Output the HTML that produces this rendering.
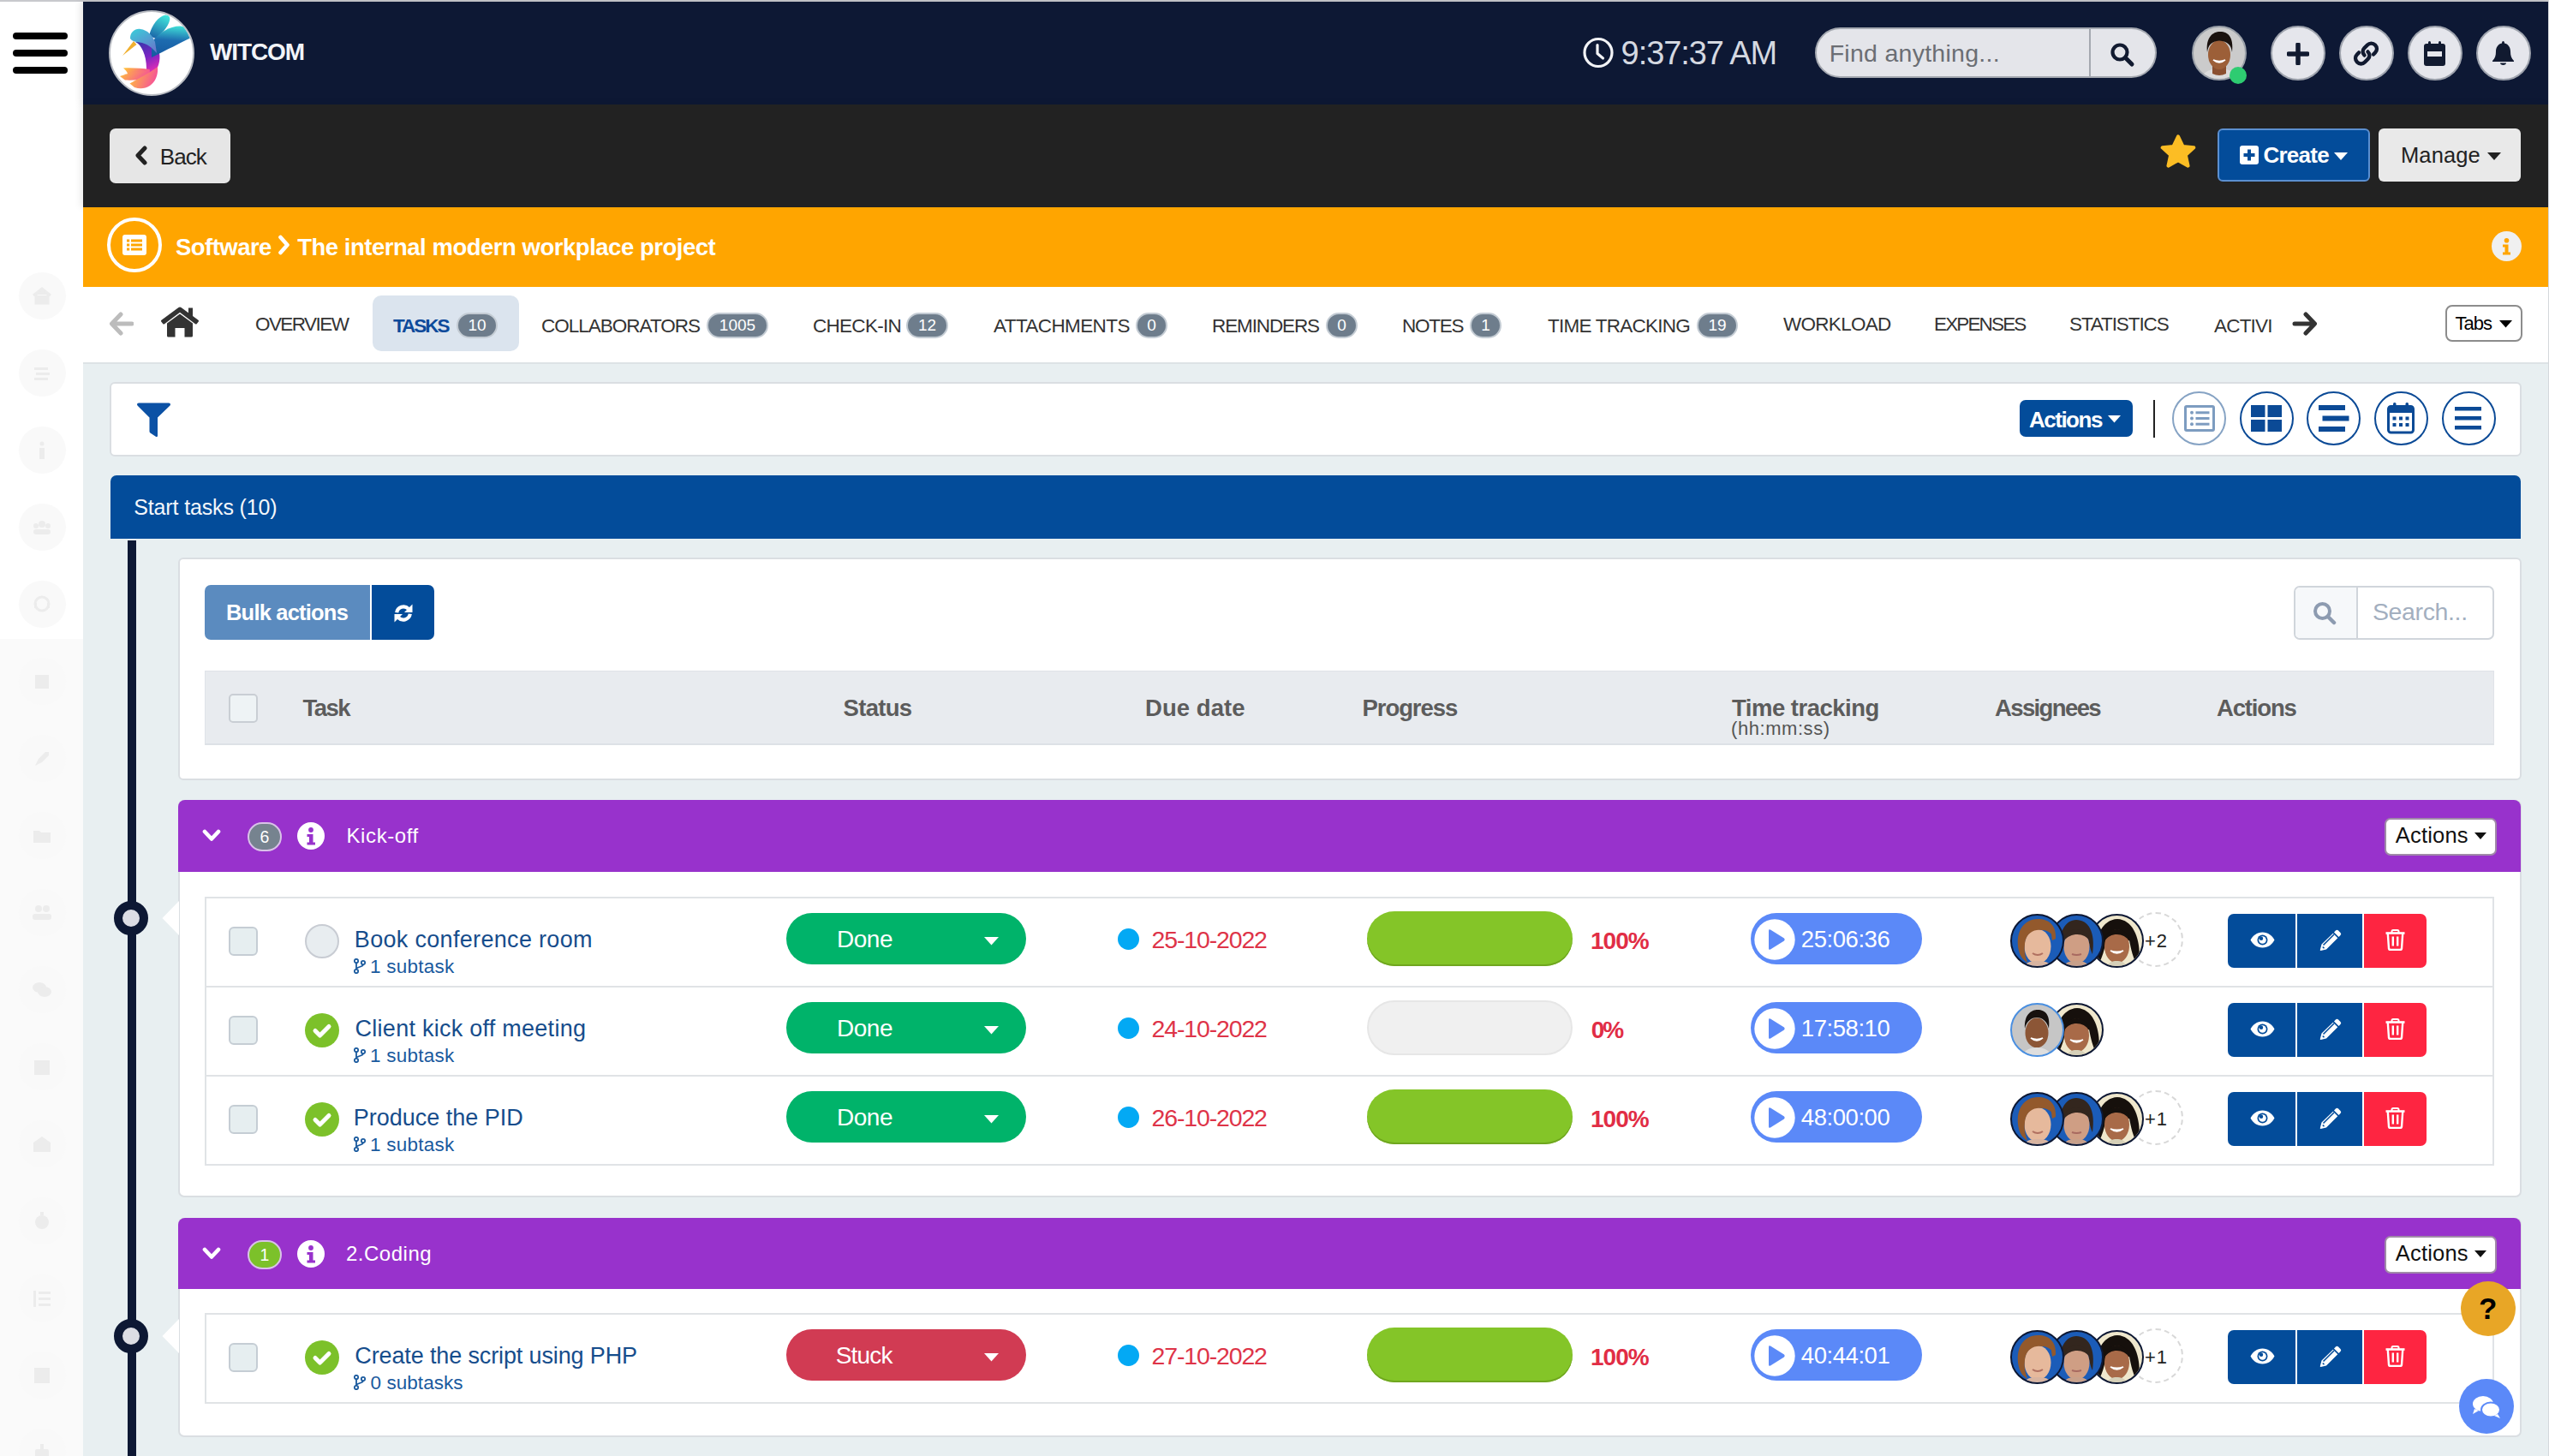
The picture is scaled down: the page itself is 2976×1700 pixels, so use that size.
<!DOCTYPE html>
<html><head><meta charset="utf-8">
<style>
*{box-sizing:border-box;margin:0;padding:0}
html,body{width:2976px;height:1700px;overflow:hidden}
body{position:relative;background:#e8eff1;font-family:"Liberation Sans",sans-serif;color:#333}
.a{position:absolute}
.t{position:absolute;white-space:nowrap;line-height:1}
svg{display:block}
.th{font-size:27px;font-weight:bold;color:#5c5c5c}
.cb{width:34px;height:34px;border-radius:6px;background:#e6eef0;border:2px solid #c5cdd4}
.ttl{font-size:27px;color:#164d8c}
.sub{font-size:22.5px;color:#1a5a9e}
.pill{width:280px;height:60px;border-radius:30px}
.stx{font-size:28px;color:#fff}
.dt{font-size:28.5px;color:#de3448}
.pb{width:240px;height:64px;border-radius:32px}
.pc{font-size:28px;font-weight:bold;color:#e12d45}
.tp{width:200px;height:60px;border-radius:30px;background:#5b89f8}
.tt{font-size:27.5px;color:#fff}
.av{width:63px;height:63px;border-radius:50%;border:2.5px solid #0d1834;overflow:hidden}
.av svg{margin:-1px 0 0 -1px}
.ab{width:79px;height:63px}
.tab{font-size:21.5px;color:#333}
.bdg{position:absolute;height:30px;border-radius:15px;background:#6e7d8c;border:2px solid #c3cbd3;color:#fff;font-size:19px;line-height:26px;text-align:center}
</style></head><body>
<!-- top grey line -->
<div class="a" style="left:0;top:0;width:2976px;height:2px;background:#c8c9cd"></div>
<!-- right edge line -->
<div class="a" style="left:2975px;top:0;width:1px;height:1700px;background:#d5d8dc;z-index:50"></div>

<!-- SIDEBAR -->
<div id="sidebar" class="a" style="left:0;top:2px;width:97px;height:1698px;background:#fff;background:linear-gradient(#fff 0,#fff 744px,#fafafa 744px)">
  <div class="a" style="left:15px;top:36px;width:64px;height:8px;border-radius:4px;background:#000"></div>
  <div class="a" style="left:15px;top:56px;width:64px;height:8px;border-radius:4px;background:#000"></div>
  <div class="a" style="left:15px;top:76px;width:64px;height:8px;border-radius:4px;background:#000"></div>
<div class="a" style="left:22px;top:316px;width:55px;height:55px;border-radius:50%;background:#f9f9f9"></div><svg class="a" style="left:35px;top:330px" width="28" height="28" viewBox="0 0 28 28"><path d="M4 13 L14 5 L24 13 M7 12 V22 H21 V12" fill="#ececec" stroke="#ececec" stroke-width="3"/></svg>
<div class="a" style="left:22px;top:406px;width:55px;height:55px;border-radius:50%;background:#f9f9f9"></div><svg class="a" style="left:35px;top:420px" width="28" height="28" viewBox="0 0 28 28"><rect x="5" y="7" width="16" height="3" fill="#ececec"/><rect x="7" y="13" width="16" height="3" fill="#ececec"/><rect x="5" y="19" width="16" height="3" fill="#ececec"/></svg>
<div class="a" style="left:22px;top:496px;width:55px;height:55px;border-radius:50%;background:#f9f9f9"></div><svg class="a" style="left:35px;top:510px" width="28" height="28" viewBox="0 0 28 28"><circle cx="14" cy="6" r="2.5" fill="#ececec"/><rect x="11" y="11" width="6" height="13" fill="#ececec"/></svg>
<div class="a" style="left:22px;top:586px;width:55px;height:55px;border-radius:50%;background:#f9f9f9"></div><svg class="a" style="left:35px;top:600px" width="28" height="28" viewBox="0 0 28 28"><circle cx="14" cy="10" r="4" fill="#ececec"/><circle cx="7" cy="12" r="3" fill="#ececec"/><circle cx="21" cy="12" r="3" fill="#ececec"/><rect x="4" y="16" width="20" height="6" rx="3" fill="#ececec"/></svg>
<div class="a" style="left:22px;top:676px;width:55px;height:55px;border-radius:50%;background:#f9f9f9"></div><svg class="a" style="left:35px;top:690px" width="28" height="28" viewBox="0 0 28 28"><circle cx="14" cy="13" r="8" fill="none" stroke="#ececec" stroke-width="3"/><rect x="5" y="12" width="3" height="6" fill="#ececec"/><rect x="20" y="12" width="3" height="6" fill="#ececec"/></svg>
<div class="a" style="left:22px;top:766px;width:55px;height:55px;border-radius:50%;background:#f9f9f9"></div><svg class="a" style="left:35px;top:780px" width="28" height="28" viewBox="0 0 28 28"><rect x="6" y="6" width="16" height="16" fill="#ececec"/></svg>
<div class="a" style="left:22px;top:856px;width:55px;height:55px;border-radius:50%;background:#f9f9f9"></div><svg class="a" style="left:35px;top:870px" width="28" height="28" viewBox="0 0 28 28"><path d="M6 22 L10 14 L18 6 L22 6 L22 10 L14 18Z" fill="#ececec"/></svg>
<div class="a" style="left:22px;top:946px;width:55px;height:55px;border-radius:50%;background:#f9f9f9"></div><svg class="a" style="left:35px;top:960px" width="28" height="28" viewBox="0 0 28 28"><path d="M4 8 H11 L13 10 H24 V22 H4Z" fill="#ececec"/></svg>
<div class="a" style="left:22px;top:1036px;width:55px;height:55px;border-radius:50%;background:#f9f9f9"></div><svg class="a" style="left:35px;top:1050px" width="28" height="28" viewBox="0 0 28 28"><circle cx="10" cy="9" r="4" fill="#ececec"/><circle cx="19" cy="9" r="4" fill="#ececec"/><rect x="3" y="15" width="22" height="7" rx="3" fill="#ececec"/></svg>
<div class="a" style="left:22px;top:1126px;width:55px;height:55px;border-radius:50%;background:#f9f9f9"></div><svg class="a" style="left:35px;top:1140px" width="28" height="28" viewBox="0 0 28 28"><ellipse cx="11" cy="11" rx="8" ry="6" fill="#ececec"/><ellipse cx="17" cy="16" rx="8" ry="6" fill="#ececec"/></svg>
<div class="a" style="left:22px;top:1216px;width:55px;height:55px;border-radius:50%;background:#f9f9f9"></div><svg class="a" style="left:35px;top:1230px" width="28" height="28" viewBox="0 0 28 28"><rect x="5" y="6" width="18" height="17" fill="#ececec"/></svg>
<div class="a" style="left:22px;top:1306px;width:55px;height:55px;border-radius:50%;background:#f9f9f9"></div><svg class="a" style="left:35px;top:1320px" width="28" height="28" viewBox="0 0 28 28"><path d="M4 12 L14 5 L24 12 V23 H4Z" fill="#ececec"/></svg>
<div class="a" style="left:22px;top:1396px;width:55px;height:55px;border-radius:50%;background:#f9f9f9"></div><svg class="a" style="left:35px;top:1410px" width="28" height="28" viewBox="0 0 28 28"><circle cx="14" cy="15" r="8" fill="#ececec"/><rect x="12" y="3" width="4" height="4" fill="#ececec"/></svg>
<div class="a" style="left:22px;top:1486px;width:55px;height:55px;border-radius:50%;background:#f9f9f9"></div><svg class="a" style="left:35px;top:1500px" width="28" height="28" viewBox="0 0 28 28"><rect x="10" y="6" width="14" height="3" fill="#ececec"/><rect x="10" y="13" width="14" height="3" fill="#ececec"/><rect x="10" y="20" width="14" height="3" fill="#ececec"/><rect x="4" y="5" width="3" height="19" fill="#ececec"/></svg>
<div class="a" style="left:22px;top:1576px;width:55px;height:55px;border-radius:50%;background:#f9f9f9"></div><svg class="a" style="left:35px;top:1590px" width="28" height="28" viewBox="0 0 28 28"><rect x="5" y="5" width="18" height="18" fill="#ececec"/></svg>
<div class="a" style="left:22px;top:1666px;width:55px;height:55px;border-radius:50%;background:#f9f9f9"></div><svg class="a" style="left:35px;top:1680px" width="28" height="28" viewBox="0 0 28 28"><rect x="6" y="10" width="16" height="12" rx="2" fill="#ececec"/><rect x="12" y="4" width="4" height="6" fill="#ececec"/></svg>
</div>

<!-- NAVY TOP BAR -->
<div id="topbar" class="a" style="left:97px;top:2px;width:2878px;height:120px;background:#0d1834;box-shadow:-3px 0 8px rgba(0,0,0,0.10)"></div>
<!-- DARK BAR -->
<div id="darkbar" class="a" style="left:97px;top:122px;width:2878px;height:120px;background:#222;box-shadow:-3px 0 8px rgba(0,0,0,0.08)"></div>
<!-- ORANGE BAR -->
<div id="orangebar" class="a" style="left:97px;top:242px;width:2878px;height:93px;background:#ffa500"></div>
<!-- TABS ROW -->
<div id="tabsrow" class="a" style="left:97px;top:335px;width:2878px;height:90px;background:#fff;border-bottom:2px solid #dde3e6"></div>


<!-- NAVY TOP BAR CONTENT -->
<div class="a" style="left:127px;top:12px;width:100px;height:100px;border-radius:50%;background:#fff;border:2px solid #b9bcc2;overflow:hidden">
<svg width="96" height="96" viewBox="2 2 96 96" style="margin:0">
<defs>
<linearGradient id="gw1" x1="0.7" y1="0" x2="0.3" y2="1"><stop offset="0" stop-color="#40e4dc"/><stop offset="1" stop-color="#1b66a8"/></linearGradient>
<linearGradient id="gw2" x1="0.5" y1="0" x2="0.4" y2="1"><stop offset="0" stop-color="#3fdcd6"/><stop offset="0.45" stop-color="#1d6cb0"/><stop offset="1" stop-color="#165aa0"/></linearGradient>
<linearGradient id="gh" x1="0.2" y1="0" x2="0.8" y2="1"><stop offset="0" stop-color="#3cc8d8"/><stop offset="1" stop-color="#6a76cc"/></linearGradient>
<linearGradient id="gb" x1="0" y1="0" x2="0.3" y2="1"><stop offset="0" stop-color="#2e3aa6"/><stop offset="0.55" stop-color="#7a24c4"/><stop offset="1" stop-color="#e82cb4"/></linearGradient>
<linearGradient id="gt" x1="0" y1="0.3" x2="1" y2="0.6"><stop offset="0" stop-color="#ffbe3c"/><stop offset="1" stop-color="#f54c9c"/></linearGradient>
</defs>
<path d="M31 37 C38 40 44 52 44 68 L44 78 C52 76 57 70 59 60 C61 50 57 42 52 37 C45 34 36 34 31 37 Z" fill="url(#gb)"/>
<path d="M47 30 C50 17 58 7 66 5.5 C70 5 72 8 71 12 C69 20 62 27 55 33 Z" fill="url(#gw1)"/>
<path d="M50 38 C58 26 72 18 84 18.5 C90 19 94 25 96 32 C84 38 68 46 50 55 Z" fill="url(#gw2)"/>
<path d="M25 33 C25 25 31 21 37 22 C45 23 51 29 54 37 L56 50 C50 43 44 38.5 36 37.5 C31 37 27 36 25 33 Z" fill="url(#gh)"/>
<path d="M29 36 L16 53 L32.5 40 Z" fill="#f0b030"/>
<path d="M17 67.5 C28 67 40 68 48 69 L45 76 C36 75 28 74 22 74.5 C22 72 19 69.5 17 67.5 Z" fill="url(#gt)"/>
<path d="M13 77 C24 73 36 71 48 70 L47 80 C38 81 28 82 19 81.5 C17 80 15 78.5 13 77 Z" fill="url(#gt)"/>
<path d="M24.5 85.5 C34 80 46 74 57 66 C58 76 54 84 48 88 C42 92 36 92 30 90 C28 88.5 26.5 87 24.5 85.5 Z" fill="url(#gt)"/>
</svg>
</div>
<div class="t" id="witcom" style="left:245.0px;top:47px;font-size:28px;font-weight:bold;color:#f2f4f8;letter-spacing:-1.12px">WITCOM</div>

<!-- clock -->
<svg class="a" style="left:1847px;top:43px" width="38" height="38" viewBox="0 0 38 38"><circle cx="19" cy="18.5" r="16" fill="none" stroke="#f2f3f6" stroke-width="3.2"/><path d="M18 9.5 V19.5 L24.5 25" fill="none" stroke="#f2f3f6" stroke-width="3.2" stroke-linecap="round" stroke-linejoin="round"/></svg>
<div class="t" id="clock" style="left:1892.6px;top:43px;font-size:38px;color:#d5d9e1;letter-spacing:-1.07px">9:37:37 AM</div>

<!-- search -->
<div class="a" style="left:2119px;top:32px;width:399px;height:59px;border-radius:30px;background:#e4e5ea;border:2px solid #a4a8b0"></div>
<div class="a" style="left:2439px;top:34px;width:2px;height:55px;background:#a4a8b0"></div>
<div class="t" id="find" style="left:2135.7px;top:48px;font-size:28.5px;color:#6b6e74;letter-spacing:0.27px">Find anything...</div>
<svg class="a" style="left:2463px;top:49px" width="30" height="30" viewBox="0 0 30 30"><circle cx="12" cy="12" r="8.5" fill="none" stroke="#111a30" stroke-width="4.2"/><path d="M18.5 18.5 L26 26" stroke="#111a30" stroke-width="5" stroke-linecap="round"/></svg>

<!-- avatar -->
<div class="a" style="left:2559px;top:30px;width:64px;height:64px;border-radius:50%;background:#cbcbcb;border:2px solid #9aa0a8;overflow:hidden">
<svg width="60" height="60" viewBox="0 0 60 60"><path d="M8 62 C10 52 20 48 30 48 C40 48 50 52 52 62Z" fill="#dcdcdc"/><path d="M22 44 H38 V54 Q30 58 22 54Z" fill="#8a5030"/><ellipse cx="30" cy="32" rx="13" ry="17" fill="#9c5f38"/><path d="M16 29 C14 12 22 5 31 5 C41 5 47 12 45 29 C44 21 40 16 30 15.5 C21 16 17 21 16 29Z" fill="#1a120e"/><path d="M23 38 Q30 44 37 38 Q30 41 23 38Z" fill="#fff" stroke="#fff" stroke-width="1.5"/></svg>
</div>
<div class="a" style="left:2603px;top:78px;width:20px;height:20px;border-radius:50%;background:#2ecc71"></div>

<!-- circle buttons -->
<div class="a" style="left:2651px;top:30px;width:64px;height:64px;border-radius:50%;background:#e5e6ec;border:2.5px solid #9ea3ad"></div>
<svg class="a" style="left:2670px;top:50px" width="26" height="26" viewBox="0 0 26 26"><path d="M13 2 V24 M2 13 H24" stroke="#111a30" stroke-width="5.5" stroke-linecap="round"/></svg>
<div class="a" style="left:2731px;top:30px;width:64px;height:64px;border-radius:50%;background:#e5e6ec;border:2.5px solid #9ea3ad"></div>
<svg class="a" style="left:2747px;top:47px" width="31" height="31" viewBox="0 0 31 31"><path d="M13.5 17.5 C11 15 11 11.5 13.5 9 L17 5.5 C19.5 3 23.5 3 26 5.5 C28.5 8 28.5 12 26 14.5 L24 16.5" fill="none" stroke="#111a30" stroke-width="4.5" stroke-linecap="round"/><path d="M17.5 13.5 C20 16 20 19.5 17.5 22 L14 25.5 C11.5 28 7.5 28 5 25.5 C2.5 23 2.5 19 5 16.5 L7 14.5" fill="none" stroke="#111a30" stroke-width="4.5" stroke-linecap="round"/></svg>
<div class="a" style="left:2811px;top:30px;width:64px;height:64px;border-radius:50%;background:#e5e6ec;border:2.5px solid #9ea3ad"></div>
<svg class="a" style="left:2830px;top:48px" width="25" height="29" viewBox="0 0 25 29"><rect x="5" y="0" width="3" height="6" rx="1.5" fill="#111a30"/><rect x="17" y="0" width="3" height="6" rx="1.5" fill="#111a30"/><rect x="0" y="3" width="25" height="26" rx="3" fill="#111a30"/><rect x="4" y="12" width="17" height="6" fill="#e5e6ec"/></svg>
<div class="a" style="left:2891px;top:30px;width:64px;height:64px;border-radius:50%;background:#e5e6ec;border:2.5px solid #9ea3ad"></div>
<svg class="a" style="left:2910px;top:48px" width="25" height="28" viewBox="0 0 25 28"><path d="M12.5 0 C13.5 0 14 1 14 2.5 C19 3.5 21 8 21 12 C21 17 22 20 25 23 V24 H0 V23 C3 20 4 17 4 12 C4 8 6 3.5 11 2.5 C11 1 11.5 0 12.5 0Z" fill="#111a30"/><path d="M9 25.5 H16 C16 27 14.5 28 12.5 28 C10.5 28 9 27 9 25.5Z" fill="#111a30"/></svg>

<!-- DARK BAR CONTENT -->
<div class="a" style="left:128px;top:150px;width:141px;height:64px;border-radius:7px;background:#e6e6e6"></div>
<svg class="a" style="left:157px;top:170px" width="15" height="23" viewBox="0 0 15 23"><path d="M12 3 L4 11.5 L12 20" fill="none" stroke="#222" stroke-width="5" stroke-linecap="round" stroke-linejoin="round"/></svg>
<div class="t" id="back" style="left:186.8px;top:170px;font-size:26px;color:#222;letter-spacing:-0.93px">Back</div>

<svg class="a" style="left:2521px;top:156px" width="44" height="43" viewBox="0 0 24 23"><path d="M12 1.6 L15 7.9 L22 8.7 L16.8 13.4 L18.3 20.3 L12 16.8 L5.7 20.3 L7.2 13.4 L2 8.7 L9 7.9Z" fill="#fcbd24" stroke="#fcbd24" stroke-width="2.2" stroke-linejoin="round"/></svg>

<div class="a" style="left:2589px;top:150px;width:178px;height:62px;border-radius:6px;background:#034c9a;border:2px solid #5b8fd0"></div>
<svg class="a" style="left:2615px;top:170px" width="22" height="22" viewBox="0 0 22 22"><rect x="0" y="0" width="22" height="22" rx="3" fill="#fff"/><path d="M11 4.5 V17.5 M4.5 11 H17.5" stroke="#034c9a" stroke-width="4"/></svg>
<div class="t" id="create" style="left:2642.4px;top:168px;font-size:26px;font-weight:bold;color:#fff;letter-spacing:-0.74px">Create</div>
<svg class="a" style="left:2725px;top:178px" width="16" height="10" viewBox="0 0 16 10"><path d="M0 0 H16 L8 9Z" fill="#fff"/></svg>

<div class="a" style="left:2777px;top:150px;width:166px;height:62px;border-radius:6px;background:#e9e9e9"></div>
<div class="t" id="manage" style="left:2803.0px;top:169px;font-size:25.5px;color:#222;letter-spacing:0.12px">Manage</div>
<svg class="a" style="left:2904px;top:178px" width="16" height="10" viewBox="0 0 16 10"><path d="M0 0 H16 L8 9Z" fill="#222"/></svg>


<!-- ORANGE BAR CONTENT -->
<div class="a" style="left:125px;top:254px;width:64px;height:64px;border-radius:50%;border:4px solid #fff"></div>
<svg class="a" style="left:143px;top:274px" width="28" height="24" viewBox="0 0 28 24"><rect x="0" y="0" width="28" height="24" rx="3" fill="#fff"/><rect x="5" y="5.5" width="3.2" height="3" fill="#ffa500"/><rect x="10" y="5.5" width="13" height="3" fill="#ffa500"/><rect x="5" y="10.5" width="3.2" height="3" fill="#ffa500"/><rect x="10" y="10.5" width="13" height="3" fill="#ffa500"/><rect x="5" y="15.5" width="3.2" height="3" fill="#ffa500"/><rect x="10" y="15.5" width="13" height="3" fill="#ffa500"/></svg>
<div class="t" id="bc1" style="left:205.0px;top:275px;font-size:27.5px;font-weight:bold;color:#fff;letter-spacing:-0.54px">Software</div>
<svg class="a" style="left:324px;top:274px" width="15" height="24" viewBox="0 0 15 24"><path d="M3.5 3 L11.5 12 L3.5 21" fill="none" stroke="#fff" stroke-width="4.6" stroke-linecap="round" stroke-linejoin="round"/></svg>
<div class="t" id="bc2" style="left:347.2px;top:275px;font-size:27.5px;font-weight:bold;color:#fff;letter-spacing:-0.48px">The internal modern workplace project</div>
<div class="a" style="left:2909px;top:270px;width:35px;height:35px;border-radius:50%;background:#f0f0f0"></div>
<svg class="a" style="left:2920px;top:278px" width="13" height="20" viewBox="0 0 13 20"><circle cx="6.5" cy="2.8" r="2.8" fill="#ffa500"/><path d="M2 7.5 H8.5 V16.5 H11 V19.5 H2 V16.5 H4.5 V10.5 H2Z" fill="#ffa500"/></svg>

<!-- TABS CONTENT -->
<svg class="a" style="left:127px;top:364px" width="29" height="28" viewBox="0 0 29 28"><path d="M14 3 L3.5 14 L14 25 M4 14 H27" fill="none" stroke="#bcbcbc" stroke-width="5" stroke-linecap="round" stroke-linejoin="round"/></svg>
<svg class="a" style="left:187px;top:358px" width="46" height="36" viewBox="0 0 46 36"><rect x="33" y="1.5" width="5" height="12" fill="#333"/><path d="M1.2 17.5 Q0.5 16.5 1.5 15.8 L21.5 1 Q23 0 24.5 1 L44.5 15.8 Q45.5 16.5 44.8 17.5 L42.8 20 Q42 21 41 20.3 L23 6.8 L5 20.3 Q4 21 3.2 20 Z" fill="#333"/><path d="M8 19.5 L23 8.5 L38 19.5 V34 Q38 35.5 36.5 35.5 H28.5 V25 H17.5 V35.5 H9.5 Q8 35.5 8 34 Z" fill="#333"/></svg>
<div class="t tab" id="tb0" style="left:298.0px;top:368px;font-size:22.5px;letter-spacing:-1.57px">OVERVIEW</div>
<div class="a" style="left:435px;top:345px;width:171px;height:65px;border-radius:10px;background:#dbe4ee"></div>
<div class="t tab" id="tb1" style="left:459.0px;top:370px;color:#0d4a9b;font-weight:bold;font-size:22.5px;letter-spacing:-2.0px">TASKS</div>
<div class="bdg" style="left:533px;top:365px;width:48px">10</div>
<div class="t tab" id="tb2" style="left:632.0px;top:370px;font-size:22.5px;letter-spacing:-1.0px">COLLABORATORS</div>
<div class="bdg" style="left:825px;top:365px;width:72px">1005</div>
<div class="t tab" id="tb3" style="left:949.0px;top:370px;font-size:22.5px;letter-spacing:-0.71px">CHECK-IN</div>
<div class="bdg" style="left:1058px;top:365px;width:49px">12</div>
<div class="t tab" id="tb4" style="left:1160.0px;top:370px;font-size:22.5px;letter-spacing:-0.6px">ATTACHMENTS</div>
<div class="bdg" style="left:1326px;top:365px;width:37px">0</div>
<div class="t tab" id="tb5" style="left:1415.0px;top:370px;font-size:22.5px;letter-spacing:-1.12px">REMINDERS</div>
<div class="bdg" style="left:1548px;top:365px;width:37px">0</div>
<div class="t tab" id="tb6" style="left:1637.0px;top:370px;font-size:22.5px;letter-spacing:-1.25px">NOTES</div>
<div class="bdg" style="left:1716px;top:365px;width:37px">1</div>
<div class="t tab" id="tb7" style="left:1807.0px;top:370px;font-size:22.5px;letter-spacing:-0.75px">TIME TRACKING</div>
<div class="bdg" style="left:1981px;top:365px;width:48px">19</div>
<div class="t tab" id="tb8" style="left:2082.0px;top:368px;font-size:22.5px;letter-spacing:-0.71px">WORKLOAD</div>
<div class="t tab" id="tb9" style="left:2258.0px;top:368px;font-size:22.5px;letter-spacing:-1.86px">EXPENSES</div>
<div class="t tab" id="tb10" style="left:2416.0px;top:368px;font-size:22.5px;letter-spacing:-1.11px">STATISTICS</div>
<div class="t tab" id="tb11" style="left:2585.0px;top:370px;font-size:22.5px;letter-spacing:-0.8px">ACTIVI</div>
<svg class="a" style="left:2676px;top:364px" width="30" height="28" viewBox="0 0 30 28"><path d="M16 3 L26.5 14 L16 25 M26 14 H3" fill="none" stroke="#333" stroke-width="5" stroke-linecap="round" stroke-linejoin="round"/></svg>
<div class="a" style="left:2855px;top:356px;width:90px;height:43px;border-radius:8px;border:2px solid #8c8c8c;background:#fff"></div>
<div class="t" id="tabs" style="left:2866.6px;top:367px;font-size:22px;color:#000;letter-spacing:-1.0px">Tabs</div>
<svg class="a" style="left:2918px;top:374px" width="15" height="9" viewBox="0 0 15 9"><path d="M0 0 H15 L7.5 8.5Z" fill="#000"/></svg>


<!-- FILTER CARD -->
<div class="a" style="left:128px;top:446px;width:2816px;height:87px;border-radius:6px;background:#fff;border:2px solid #dadee2"></div>
<svg class="a" style="left:159px;top:469px" width="41" height="42" viewBox="0 0 41 42"><path d="M1.5 4.5 Q0 2 3 1.5 H38 Q41 2 39.5 4.5 L25 18.5 V39.5 Q25 42 22.5 40.5 L16.5 36.5 Q15.5 35.8 15.5 34.5 V18.5Z" fill="#0b51a5"/></svg>
<div class="a" style="left:2358px;top:467px;width:132px;height:43px;border-radius:7px;background:#034c9a"></div>
<div class="t" id="act1" style="left:2369.0px;top:477px;font-size:26px;font-weight:bold;color:#fff;letter-spacing:-1.5px">Actions</div>
<svg class="a" style="left:2461px;top:485px" width="15" height="9" viewBox="0 0 15 9"><path d="M0 0 H15 L7.5 8.5Z" fill="#fff"/></svg>
<div class="a" style="left:2514px;top:467px;width:2px;height:44px;background:#222"></div>
<div class="a" style="left:2536px;top:457px;width:63px;height:63px;border-radius:50%;border:2px solid #86a3c4"></div>
<svg class="a" style="left:2550px;top:473px" width="36" height="31" viewBox="0 0 36 31"><rect x="1.5" y="1.5" width="33" height="28" rx="1.5" fill="none" stroke="#7d9cc0" stroke-width="3"/><circle cx="9" cy="8.8" r="2" fill="#7d9cc0"/><circle cx="9" cy="15.5" r="2" fill="#7d9cc0"/><circle cx="9" cy="22.2" r="2" fill="#7d9cc0"/><rect x="13.5" y="7.3" width="16" height="3" fill="#7d9cc0"/><rect x="13.5" y="14" width="16" height="3" fill="#7d9cc0"/><rect x="13.5" y="20.7" width="16" height="3" fill="#7d9cc0"/></svg>
<div class="a" style="left:2615px;top:457px;width:63px;height:63px;border-radius:50%;border:2.5px solid #0b4a96"></div>
<svg class="a" style="left:2628px;top:473px" width="37" height="31" viewBox="0 0 37 31"><rect x="0" y="0" width="16.5" height="14" fill="#0b4a96"/><rect x="19.5" y="0" width="16.5" height="14" fill="#0b4a96"/><rect x="0" y="17" width="16.5" height="14" fill="#0b4a96"/><rect x="19.5" y="17" width="16.5" height="14" fill="#0b4a96"/></svg>
<div class="a" style="left:2693px;top:457px;width:63px;height:63px;border-radius:50%;border:2.5px solid #0b4a96"></div>
<svg class="a" style="left:2707px;top:473px" width="36" height="31" viewBox="0 0 36 31"><rect x="0" y="0" width="31" height="6" fill="#0b4a96"/><rect x="4.5" y="12.5" width="31" height="6" fill="#0b4a96"/><rect x="0" y="25" width="31" height="6" fill="#0b4a96"/></svg>
<div class="a" style="left:2772px;top:457px;width:63px;height:63px;border-radius:50%;border:2.5px solid #0b4a96"></div>
<svg class="a" style="left:2787px;top:470px" width="32" height="37" viewBox="0 0 32 37"><rect x="7" y="0" width="3.5" height="7" rx="1.5" fill="#0b4a96"/><rect x="21.5" y="0" width="3.5" height="7" rx="1.5" fill="#0b4a96"/><rect x="1.5" y="4.5" width="29" height="30.5" rx="3" fill="none" stroke="#0b4a96" stroke-width="3"/><rect x="1.5" y="4.5" width="29" height="7.5" fill="#0b4a96"/><rect x="6.5" y="16.5" width="4" height="4" fill="#0b4a96"/><rect x="14" y="16.5" width="4" height="4" fill="#0b4a96"/><rect x="21.5" y="16.5" width="4" height="4" fill="#0b4a96"/><rect x="6.5" y="24" width="4" height="4" fill="#0b4a96"/><rect x="14" y="24" width="4" height="4" fill="#0b4a96"/><rect x="21.5" y="24" width="4" height="4" fill="#0b4a96"/></svg>
<div class="a" style="left:2851px;top:457px;width:63px;height:63px;border-radius:50%;border:2.5px solid #0b4a96"></div>
<svg class="a" style="left:2866px;top:475px" width="32" height="27" viewBox="0 0 32 27"><rect x="0" y="0" width="31" height="4.5" fill="#0b4a96"/><rect x="0" y="11" width="31" height="4.5" fill="#0b4a96"/><rect x="0" y="22" width="31" height="4.5" fill="#0b4a96"/></svg>

<!-- START TASKS HEADER -->
<div class="a" style="left:129px;top:555px;width:2814px;height:74px;border-radius:7px 7px 0 0;background:#034c9a"></div>
<div class="t" id="st" style="left:156.3px;top:580px;font-size:25px;color:#f4f7fb;letter-spacing:-0.15px">Start tasks (10)</div>

<!-- TIMELINE LINE -->
<div class="a" style="left:149px;top:631px;width:10px;height:1069px;background:#0d1834"></div>

<!-- TOP CARD (bulk + header) -->
<div class="a" style="left:208px;top:651px;width:2736px;height:260px;border-radius:6px;background:#fff;border:2px solid #dadee2"></div>
<div class="a" style="left:239px;top:683px;width:193px;height:64px;border-radius:7px 0 0 7px;background:#5b8bbf"></div>
<div class="t" id="bulk" style="left:264.0px;top:703px;font-size:25.5px;font-weight:bold;color:#fff;letter-spacing:-0.8px">Bulk actions</div>
<div class="a" style="left:434px;top:683px;width:73px;height:64px;border-radius:0 7px 7px 0;background:#034c9a"></div>
<svg class="a" style="left:459px;top:704px" width="24" height="24" viewBox="0 0 24 24"><path d="M4.2 11.2 A8 8 0 0 1 17.8 6.8" stroke="#fff" stroke-width="4.2" fill="none"/><path d="M22.5 1.5 V11 H13 Z" fill="#fff"/><path d="M19.8 12.8 A8 8 0 0 1 6.2 17.2" stroke="#fff" stroke-width="4.2" fill="none"/><path d="M1.5 22.5 V13 H11 Z" fill="#fff"/></svg>
<div class="a" style="left:2678px;top:684px;width:234px;height:63px;border-radius:7px;border:2px solid #d0d5db;background:#fff"></div>
<div class="a" style="left:2680px;top:686px;width:73px;height:59px;border-radius:5px 0 0 5px;background:#f6f8fa;border-right:2px solid #d0d5db"></div>
<svg class="a" style="left:2700px;top:702px" width="28" height="28" viewBox="0 0 28 28"><circle cx="11.5" cy="11.5" r="8.5" fill="none" stroke="#8d9bb0" stroke-width="4"/><path d="M18 18 L25 25" stroke="#8d9bb0" stroke-width="4.5" stroke-linecap="round"/></svg>
<div class="t" id="srch" style="left:2769.9px;top:700px;font-size:28.5px;color:#a3afbf;letter-spacing:-0.36px">Search...</div>

<!-- TABLE HEADER -->
<div class="a" style="left:239px;top:783px;width:2673px;height:87px;background:#e8ebef;border:1px solid #dfe3e8;border-bottom:2px solid #dde1e6"></div>
<div class="a" style="left:267px;top:810px;width:34px;height:34px;border-radius:5px;background:#eef3f5;border:2px solid #c9ced4"></div>
<div class="t th" id="th1" style="left:353.4px;top:813px;font-size:27.5px;letter-spacing:-1.47px">Task</div>
<div class="t th" id="th2" style="left:984.6px;top:813px;font-size:27.5px;letter-spacing:-0.72px">Status</div>
<div class="t th" id="th3" style="left:1337.0px;top:813px;font-size:27.5px;letter-spacing:0.07px">Due date</div>
<div class="t th" id="th4" style="left:1590.6px;top:813px;font-size:27.5px;letter-spacing:-1.09px">Progress</div>
<div class="t th" id="th5" style="left:2022.0px;top:813px;font-size:27.5px;letter-spacing:-0.5px">Time tracking</div>
<div class="t" id="th5b" style="left:2021.0px;top:840px;font-size:22px;color:#555;letter-spacing:0.56px">(hh:mm:ss)</div>
<div class="t th" id="th6" style="left:2329.0px;top:813px;font-size:27.5px;letter-spacing:-1.62px">Assignees</div>
<div class="t th" id="th7" style="left:2588.0px;top:813px;font-size:27.5px;letter-spacing:-1.17px">Actions</div>


<!-- FLOATING -->
<div class="a" style="left:2873px;top:1496px;width:64px;height:64px;border-radius:50%;background:#e8a626;z-index:20"></div>
<div class="t" style="left:2894px;top:1510px;font-size:35px;font-weight:bold;color:#000;z-index:21">?</div>
<div class="a" style="left:2871px;top:1610px;width:64px;height:64px;border-radius:50%;background:#5b89f8;z-index:20"></div>
<svg class="a" style="left:2886px;top:1629px;z-index:21" width="34" height="28" viewBox="0 0 34 28"><ellipse cx="13" cy="10" rx="12" ry="9" fill="#fff"/><path d="M3 16 L1 22 L8 18Z" fill="#fff"/><ellipse cx="22" cy="17" rx="11" ry="8.5" fill="#fff" stroke="#5b89f8" stroke-width="2"/><path d="M30 22 L33 27 L26 24Z" fill="#fff"/></svg>
<!--GROUPS-->
<div class="a" style="left:208px;top:934px;width:2736px;height:464px;border-radius:7px;background:#fff;border:2px solid #dadee2"></div>
<div class="a" style="left:208px;top:934px;width:2735px;height:84px;border-radius:8px 8px 0 0;background:#9832cc"></div>
<svg class="a" style="left:236px;top:968px" width="22" height="15" viewBox="0 0 22 15"><path d="M3 3 L11 11.5 L19 3" fill="none" stroke="#fff" stroke-width="4.6" stroke-linecap="round" stroke-linejoin="round"/></svg>
<div class="a" style="left:289px;top:960px;width:40px;height:34px;border-radius:17px;background:#76838f;border:2px solid #d9c2e8;color:#fff;font-size:19.5px;line-height:30px;text-align:center">6</div>
<div class="a" style="left:347px;top:960px;width:32px;height:32px;border-radius:50%;background:#fff"></div>
<svg class="a" style="left:356px;top:966px" width="14" height="21" viewBox="0 0 14 21"><circle cx="7" cy="3" r="2.9" fill="#9832cc"/><path d="M2.5 8 H9.5 V17.5 H12 V20.5 H2.5 V17.5 H5 V11 H2.5Z" fill="#9832cc"/></svg>
<div class="t" style="left:404.5px;top:964px;font-size:24px;letter-spacing:0.6px;color:#fff">Kick-off</div>
<div class="a" style="left:2784px;top:955px;width:131px;height:44px;border-radius:7px;background:#fff;border:2px solid #a08aa8"></div>
<div class="t" style="left:2796.8px;top:963px;font-size:25.5px;letter-spacing:0.2px;color:#111">Actions</div>
<svg class="a" style="left:2889px;top:972px" width="14" height="9" viewBox="0 0 14 9"><path d="M0 0 H14 L7 8Z" fill="#111"/></svg>
<div class="a" style="left:239px;top:1047px;width:2673px;height:314px;border:2px solid #e0e3e6;background:#fff"></div>
<div class="a" style="left:241px;top:1151px;width:2669px;height:2px;background:#e0e3e6"></div>
<div class="a" style="left:241px;top:1255px;width:2669px;height:2px;background:#e0e3e6"></div>
<svg class="a" style="left:189px;top:1051px" width="21" height="42" viewBox="0 0 21 42"><path d="M0.5 21 L20 1 V41Z" fill="#fff"/></svg>
<div class="a" style="left:133px;top:1052px;width:40px;height:40px;border-radius:50%;background:#dcdde4;border:10px solid #0d1834"></div>
<div class="a cb" style="left:267px;top:1082px"></div>
<div class="a" style="left:356px;top:1079px;width:40px;height:40px;border-radius:50%;background:#e8edf0;border:2px solid #c8ccd3"></div>
<div class="t ttl" style="left:413.8px;top:1084px;letter-spacing:0.32px">Book conference room</div>
<svg class="a" style="left:413px;top:1119px" width="14" height="18" viewBox="0 0 14 18"><circle cx="3" cy="3" r="2.2" fill="none" stroke="#1a5a9e" stroke-width="1.8"/><circle cx="3" cy="15" r="2.2" fill="none" stroke="#1a5a9e" stroke-width="1.8"/><circle cx="11" cy="5" r="2.2" fill="none" stroke="#1a5a9e" stroke-width="1.8"/><path d="M3 5.2 V12.8 M11 7.2 C11 10 3 10 3 12.5" fill="none" stroke="#1a5a9e" stroke-width="1.8"/></svg>
<div class="t sub" style="left:432px;top:1118px;letter-spacing:0.25px">1 subtask</div>
<div class="a pill" style="left:918px;top:1066px;background:#00b36a"></div>
<div class="t stx" style="left:976.9px;top:1083px;letter-spacing:-0.43px">Done</div>
<svg class="a" style="left:1149px;top:1094px" width="17" height="10" viewBox="0 0 17 10"><path d="M0 0 H17 L8.5 9.5Z" fill="#fff"/></svg>
<div class="a" style="left:1305px;top:1084px;width:25px;height:25px;border-radius:50%;background:#03a9f4"></div>
<div class="t dt" style="left:1344.6px;top:1083px;letter-spacing:-1.16px">25-10-2022</div>
<div class="a pb" style="left:1596px;top:1064px;background:#84c528;box-shadow:inset 0 -2px 0 #6fa61f"></div>
<div class="t pc" style="left:1857px;top:1085px;letter-spacing:-1.0px">100%</div>
<div class="a tp" style="left:2044px;top:1066px"></div>
<svg class="a" style="left:2048px;top:1073px" width="48" height="48" viewBox="0 0 48 48"><circle cx="24" cy="24" r="23.7" fill="#fff"/><path d="M17 13.5 Q17 11.5 19 12.5 L35 22.5 Q36.5 24 35 25.5 L19 35.5 Q17 36.5 17 34.5Z" fill="#5b89f8"/></svg>
<div class="t tt" style="left:2102.8px;top:1083px;letter-spacing:-0.44px">25:06:36</div>
<div class="a" style="left:2485px;top:1065px;width:64px;height:64px;border-radius:50%;border:2.5px dashed #d8d8d8"></div>
<div class="t" style="left:2504px;top:1088px;font-size:22px;letter-spacing:1px;color:#222">+2</div>
<div class="a av" style="left:2440px;top:1067px;border-color:#0d1834;background:#efe7cc"><svg width="60" height="60" viewBox="0 0 60 60"><path d="M6 62 C2 34 10 6 31 5 C52 6 60 34 56 62 C50 54 47 40 45 30 L18 30 C16 40 13 54 6 62Z" fill="#16100c"/><ellipse cx="30.5" cy="37" rx="14.5" ry="19.5" fill="#a86a48"/><path d="M16 31 C17 13 44 12 45 31 C39 21 23 20 16 31Z" fill="#16100c"/><path d="M23 42 Q30.5 48 38 42 Q30.5 44.5 23 42Z" fill="#fff" stroke="#fff" stroke-width="1.5"/><path d="M18 62 C20 56 25 54 30 54 C36 54 41 56 43 62Z" fill="#d6d0b8"/></svg></div>
<div class="a av" style="left:2393px;top:1067px;border-color:#0d1834;background:#1b5cb8"><svg width="60" height="60" viewBox="0 0 60 60"><path d="M12 44 C8 20 18 6 30 6 C44 6 53 20 49 46 C46 40 45 32 44 28 L17 28 C15 34 14 40 12 44Z" fill="#33261e"/><ellipse cx="30.5" cy="37.5" rx="15" ry="19.5" fill="#cf9e84"/><path d="M15 31 C16 13 44 12 46 31 C40 21 24 20 15 31Z" fill="#33261e"/><path d="M25 46 Q30.5 48 36 46" stroke="#a86a60" stroke-width="2" fill="none"/><path d="M14 62 C16 56 22 54 30 54 C38 54 44 56 46 62Z" fill="#c8a08a"/></svg></div>
<div class="a av" style="left:2347px;top:1067px;border-color:#0d1834;background:#1b5cb8"><svg width="60" height="60" viewBox="0 0 60 60"><ellipse cx="31" cy="37" rx="15.5" ry="20" fill="#e6b99c"/><path d="M9 42 C4 20 15 5 31 5 C45 5 53 13 52 28 C47 20 40 17 30 18 C22 19 17 25 16 34 C15 42 16 48 19 56 C13 52 10 47 9 42Z" fill="#93592c"/><path d="M46 16 C50 18 52 22 52 28 L48 30 Z" fill="#93592c"/><path d="M25 45 Q31 49 37 45" stroke="#b07060" stroke-width="2" fill="none"/><path d="M14 62 C16 56 22 54 31 54 C40 54 46 56 48 62Z" fill="#d8b4a0"/></svg></div>
<div class="a ab" style="left:2601px;top:1067px;border-radius:7px 0 0 7px;background:#034c9a"></div>
<svg class="a" style="left:2627px;top:1088px" width="29" height="19" viewBox="0 0 29 19"><path d="M14.5 0.5 C21 0.5 26 4.5 28.5 9.5 C26 14.5 21 18.5 14.5 18.5 C8 18.5 3 14.5 0.5 9.5 C3 4.5 8 0.5 14.5 0.5Z" fill="#fff"/><circle cx="14.5" cy="9.5" r="6" fill="#034c9a"/><circle cx="14.5" cy="9.5" r="4.3" fill="#fff"/><circle cx="13" cy="7.8" r="2.2" fill="#034c9a"/></svg>
<div class="a ab" style="left:2682px;top:1067px;width:76px;background:#034c9a"></div>
<svg class="a" style="left:2708px;top:1085px" width="26" height="26" viewBox="0 0 26 26"><path d="M19 1.5 Q20.5 0 22 1.5 L24.5 4 Q26 5.5 24.5 7 L22.5 9 L17 3.5Z" fill="#fff"/><path d="M15.8 4.7 L21.3 10.2 L8 23.5 L1.5 25 Q0.5 25 0.8 24 L2.5 17.5Z" fill="#fff"/><path d="M4.5 18.5 L17 6" stroke="#034c9a" stroke-width="1.6"/><path d="M3.8 20.5 L5.5 22.2" stroke="#034c9a" stroke-width="1.6"/></svg>
<div class="a ab" style="left:2760px;top:1067px;width:73px;border-radius:0 7px 7px 0;background:#fe2541"></div>
<svg class="a" style="left:2785px;top:1085px" width="23" height="25" viewBox="0 0 23 25"><path d="M7.5 4 V2.5 Q7.5 1 9 1 H14 Q15.5 1 15.5 2.5 V4" fill="none" stroke="#fff" stroke-width="2"/><path d="M0.5 4.5 H22.5" stroke="#fff" stroke-width="2.6"/><path d="M2.8 5 L4 22.5 Q4.2 24 5.8 24 H17.2 Q18.8 24 19 22.5 L20.2 5" fill="none" stroke="#fff" stroke-width="2.4"/><path d="M8.8 8.5 V19.5 M14.2 8.5 V19.5" stroke="#fff" stroke-width="2.4"/></svg>
<div class="a cb" style="left:267px;top:1186px"></div>
<svg class="a" style="left:356px;top:1183px" width="40" height="40" viewBox="0 0 40 40"><circle cx="20" cy="20" r="20" fill="#7cc12a"/><path d="M12 20.5 L17.5 26 L28 15.5" fill="none" stroke="#fff" stroke-width="5" stroke-linecap="round" stroke-linejoin="round"/></svg>
<div class="t ttl" style="left:414.6px;top:1188px;letter-spacing:0.26px">Client kick off meeting</div>
<svg class="a" style="left:413px;top:1223px" width="14" height="18" viewBox="0 0 14 18"><circle cx="3" cy="3" r="2.2" fill="none" stroke="#1a5a9e" stroke-width="1.8"/><circle cx="3" cy="15" r="2.2" fill="none" stroke="#1a5a9e" stroke-width="1.8"/><circle cx="11" cy="5" r="2.2" fill="none" stroke="#1a5a9e" stroke-width="1.8"/><path d="M3 5.2 V12.8 M11 7.2 C11 10 3 10 3 12.5" fill="none" stroke="#1a5a9e" stroke-width="1.8"/></svg>
<div class="t sub" style="left:432px;top:1222px;letter-spacing:0.25px">1 subtask</div>
<div class="a pill" style="left:918px;top:1170px;background:#00b36a"></div>
<div class="t stx" style="left:976.9px;top:1187px;letter-spacing:-0.43px">Done</div>
<svg class="a" style="left:1149px;top:1198px" width="17" height="10" viewBox="0 0 17 10"><path d="M0 0 H17 L8.5 9.5Z" fill="#fff"/></svg>
<div class="a" style="left:1305px;top:1188px;width:25px;height:25px;border-radius:50%;background:#03a9f4"></div>
<div class="t dt" style="left:1344.6px;top:1187px;letter-spacing:-1.16px">24-10-2022</div>
<div class="a pb" style="left:1596px;top:1168px;background:#f0f0f0;border:2px solid #e6e6e6"></div>
<div class="t pc" style="left:1857.7px;top:1189px;letter-spacing:-2.1px">0%</div>
<div class="a tp" style="left:2044px;top:1170px"></div>
<svg class="a" style="left:2048px;top:1177px" width="48" height="48" viewBox="0 0 48 48"><circle cx="24" cy="24" r="23.7" fill="#fff"/><path d="M17 13.5 Q17 11.5 19 12.5 L35 22.5 Q36.5 24 35 25.5 L19 35.5 Q17 36.5 17 34.5Z" fill="#5b89f8"/></svg>
<div class="t tt" style="left:2102.8px;top:1187px;letter-spacing:-0.44px">17:58:10</div>
<div class="a av" style="left:2393px;top:1171px;border-color:#0d1834;background:#efe7cc"><svg width="60" height="60" viewBox="0 0 60 60"><path d="M6 62 C2 34 10 6 31 5 C52 6 60 34 56 62 C50 54 47 40 45 30 L18 30 C16 40 13 54 6 62Z" fill="#16100c"/><ellipse cx="30.5" cy="37" rx="14.5" ry="19.5" fill="#a86a48"/><path d="M16 31 C17 13 44 12 45 31 C39 21 23 20 16 31Z" fill="#16100c"/><path d="M23 42 Q30.5 48 38 42 Q30.5 44.5 23 42Z" fill="#fff" stroke="#fff" stroke-width="1.5"/><path d="M18 62 C20 56 25 54 30 54 C36 54 41 56 43 62Z" fill="#d6d0b8"/></svg></div>
<div class="a av" style="left:2347px;top:1171px;border-color:#4a8fe0;background:#c6c6c6"><svg width="60" height="60" viewBox="0 0 60 60"><ellipse cx="30" cy="34" rx="13.5" ry="17.5" fill="#8c5636"/><path d="M16 29 C15 12 24 7 31 7 C40 7 46 13 44 29 C42 20 36 16 30 16 C24 16 18 20 16 29Z" fill="#17110e"/><path d="M23 40 Q30 46 37 40 Q30 43 23 40Z" fill="#fff" stroke="#fff" stroke-width="1.5"/><path d="M12 62 C14 55 22 51 30 51 C38 51 46 55 48 62Z" fill="#dedede"/></svg></div>
<div class="a ab" style="left:2601px;top:1171px;border-radius:7px 0 0 7px;background:#034c9a"></div>
<svg class="a" style="left:2627px;top:1192px" width="29" height="19" viewBox="0 0 29 19"><path d="M14.5 0.5 C21 0.5 26 4.5 28.5 9.5 C26 14.5 21 18.5 14.5 18.5 C8 18.5 3 14.5 0.5 9.5 C3 4.5 8 0.5 14.5 0.5Z" fill="#fff"/><circle cx="14.5" cy="9.5" r="6" fill="#034c9a"/><circle cx="14.5" cy="9.5" r="4.3" fill="#fff"/><circle cx="13" cy="7.8" r="2.2" fill="#034c9a"/></svg>
<div class="a ab" style="left:2682px;top:1171px;width:76px;background:#034c9a"></div>
<svg class="a" style="left:2708px;top:1189px" width="26" height="26" viewBox="0 0 26 26"><path d="M19 1.5 Q20.5 0 22 1.5 L24.5 4 Q26 5.5 24.5 7 L22.5 9 L17 3.5Z" fill="#fff"/><path d="M15.8 4.7 L21.3 10.2 L8 23.5 L1.5 25 Q0.5 25 0.8 24 L2.5 17.5Z" fill="#fff"/><path d="M4.5 18.5 L17 6" stroke="#034c9a" stroke-width="1.6"/><path d="M3.8 20.5 L5.5 22.2" stroke="#034c9a" stroke-width="1.6"/></svg>
<div class="a ab" style="left:2760px;top:1171px;width:73px;border-radius:0 7px 7px 0;background:#fe2541"></div>
<svg class="a" style="left:2785px;top:1189px" width="23" height="25" viewBox="0 0 23 25"><path d="M7.5 4 V2.5 Q7.5 1 9 1 H14 Q15.5 1 15.5 2.5 V4" fill="none" stroke="#fff" stroke-width="2"/><path d="M0.5 4.5 H22.5" stroke="#fff" stroke-width="2.6"/><path d="M2.8 5 L4 22.5 Q4.2 24 5.8 24 H17.2 Q18.8 24 19 22.5 L20.2 5" fill="none" stroke="#fff" stroke-width="2.4"/><path d="M8.8 8.5 V19.5 M14.2 8.5 V19.5" stroke="#fff" stroke-width="2.4"/></svg>
<div class="a cb" style="left:267px;top:1290px"></div>
<svg class="a" style="left:356px;top:1287px" width="40" height="40" viewBox="0 0 40 40"><circle cx="20" cy="20" r="20" fill="#7cc12a"/><path d="M12 20.5 L17.5 26 L28 15.5" fill="none" stroke="#fff" stroke-width="5" stroke-linecap="round" stroke-linejoin="round"/></svg>
<div class="t ttl" style="left:412.8px;top:1292px;letter-spacing:-0.01px">Produce the PID</div>
<svg class="a" style="left:413px;top:1327px" width="14" height="18" viewBox="0 0 14 18"><circle cx="3" cy="3" r="2.2" fill="none" stroke="#1a5a9e" stroke-width="1.8"/><circle cx="3" cy="15" r="2.2" fill="none" stroke="#1a5a9e" stroke-width="1.8"/><circle cx="11" cy="5" r="2.2" fill="none" stroke="#1a5a9e" stroke-width="1.8"/><path d="M3 5.2 V12.8 M11 7.2 C11 10 3 10 3 12.5" fill="none" stroke="#1a5a9e" stroke-width="1.8"/></svg>
<div class="t sub" style="left:432px;top:1326px;letter-spacing:0.25px">1 subtask</div>
<div class="a pill" style="left:918px;top:1274px;background:#00b36a"></div>
<div class="t stx" style="left:976.9px;top:1291px;letter-spacing:-0.43px">Done</div>
<svg class="a" style="left:1149px;top:1302px" width="17" height="10" viewBox="0 0 17 10"><path d="M0 0 H17 L8.5 9.5Z" fill="#fff"/></svg>
<div class="a" style="left:1305px;top:1292px;width:25px;height:25px;border-radius:50%;background:#03a9f4"></div>
<div class="t dt" style="left:1344.6px;top:1291px;letter-spacing:-1.16px">26-10-2022</div>
<div class="a pb" style="left:1596px;top:1272px;background:#84c528;box-shadow:inset 0 -2px 0 #6fa61f"></div>
<div class="t pc" style="left:1857px;top:1293px;letter-spacing:-1.0px">100%</div>
<div class="a tp" style="left:2044px;top:1274px"></div>
<svg class="a" style="left:2048px;top:1281px" width="48" height="48" viewBox="0 0 48 48"><circle cx="24" cy="24" r="23.7" fill="#fff"/><path d="M17 13.5 Q17 11.5 19 12.5 L35 22.5 Q36.5 24 35 25.5 L19 35.5 Q17 36.5 17 34.5Z" fill="#5b89f8"/></svg>
<div class="t tt" style="left:2102.8px;top:1291px;letter-spacing:-0.44px">48:00:00</div>
<div class="a" style="left:2485px;top:1273px;width:64px;height:64px;border-radius:50%;border:2.5px dashed #d8d8d8"></div>
<div class="t" style="left:2504px;top:1296px;font-size:22px;letter-spacing:1px;color:#222">+1</div>
<div class="a av" style="left:2440px;top:1275px;border-color:#0d1834;background:#efe7cc"><svg width="60" height="60" viewBox="0 0 60 60"><path d="M6 62 C2 34 10 6 31 5 C52 6 60 34 56 62 C50 54 47 40 45 30 L18 30 C16 40 13 54 6 62Z" fill="#16100c"/><ellipse cx="30.5" cy="37" rx="14.5" ry="19.5" fill="#a86a48"/><path d="M16 31 C17 13 44 12 45 31 C39 21 23 20 16 31Z" fill="#16100c"/><path d="M23 42 Q30.5 48 38 42 Q30.5 44.5 23 42Z" fill="#fff" stroke="#fff" stroke-width="1.5"/><path d="M18 62 C20 56 25 54 30 54 C36 54 41 56 43 62Z" fill="#d6d0b8"/></svg></div>
<div class="a av" style="left:2393px;top:1275px;border-color:#0d1834;background:#1b5cb8"><svg width="60" height="60" viewBox="0 0 60 60"><path d="M12 44 C8 20 18 6 30 6 C44 6 53 20 49 46 C46 40 45 32 44 28 L17 28 C15 34 14 40 12 44Z" fill="#33261e"/><ellipse cx="30.5" cy="37.5" rx="15" ry="19.5" fill="#cf9e84"/><path d="M15 31 C16 13 44 12 46 31 C40 21 24 20 15 31Z" fill="#33261e"/><path d="M25 46 Q30.5 48 36 46" stroke="#a86a60" stroke-width="2" fill="none"/><path d="M14 62 C16 56 22 54 30 54 C38 54 44 56 46 62Z" fill="#c8a08a"/></svg></div>
<div class="a av" style="left:2347px;top:1275px;border-color:#0d1834;background:#1b5cb8"><svg width="60" height="60" viewBox="0 0 60 60"><ellipse cx="31" cy="37" rx="15.5" ry="20" fill="#e6b99c"/><path d="M9 42 C4 20 15 5 31 5 C45 5 53 13 52 28 C47 20 40 17 30 18 C22 19 17 25 16 34 C15 42 16 48 19 56 C13 52 10 47 9 42Z" fill="#93592c"/><path d="M46 16 C50 18 52 22 52 28 L48 30 Z" fill="#93592c"/><path d="M25 45 Q31 49 37 45" stroke="#b07060" stroke-width="2" fill="none"/><path d="M14 62 C16 56 22 54 31 54 C40 54 46 56 48 62Z" fill="#d8b4a0"/></svg></div>
<div class="a ab" style="left:2601px;top:1275px;border-radius:7px 0 0 7px;background:#034c9a"></div>
<svg class="a" style="left:2627px;top:1296px" width="29" height="19" viewBox="0 0 29 19"><path d="M14.5 0.5 C21 0.5 26 4.5 28.5 9.5 C26 14.5 21 18.5 14.5 18.5 C8 18.5 3 14.5 0.5 9.5 C3 4.5 8 0.5 14.5 0.5Z" fill="#fff"/><circle cx="14.5" cy="9.5" r="6" fill="#034c9a"/><circle cx="14.5" cy="9.5" r="4.3" fill="#fff"/><circle cx="13" cy="7.8" r="2.2" fill="#034c9a"/></svg>
<div class="a ab" style="left:2682px;top:1275px;width:76px;background:#034c9a"></div>
<svg class="a" style="left:2708px;top:1293px" width="26" height="26" viewBox="0 0 26 26"><path d="M19 1.5 Q20.5 0 22 1.5 L24.5 4 Q26 5.5 24.5 7 L22.5 9 L17 3.5Z" fill="#fff"/><path d="M15.8 4.7 L21.3 10.2 L8 23.5 L1.5 25 Q0.5 25 0.8 24 L2.5 17.5Z" fill="#fff"/><path d="M4.5 18.5 L17 6" stroke="#034c9a" stroke-width="1.6"/><path d="M3.8 20.5 L5.5 22.2" stroke="#034c9a" stroke-width="1.6"/></svg>
<div class="a ab" style="left:2760px;top:1275px;width:73px;border-radius:0 7px 7px 0;background:#fe2541"></div>
<svg class="a" style="left:2785px;top:1293px" width="23" height="25" viewBox="0 0 23 25"><path d="M7.5 4 V2.5 Q7.5 1 9 1 H14 Q15.5 1 15.5 2.5 V4" fill="none" stroke="#fff" stroke-width="2"/><path d="M0.5 4.5 H22.5" stroke="#fff" stroke-width="2.6"/><path d="M2.8 5 L4 22.5 Q4.2 24 5.8 24 H17.2 Q18.8 24 19 22.5 L20.2 5" fill="none" stroke="#fff" stroke-width="2.4"/><path d="M8.8 8.5 V19.5 M14.2 8.5 V19.5" stroke="#fff" stroke-width="2.4"/></svg>
<div class="a" style="left:208px;top:1422px;width:2736px;height:256px;border-radius:7px;background:#fff;border:2px solid #dadee2"></div>
<div class="a" style="left:208px;top:1422px;width:2735px;height:83px;border-radius:8px 8px 0 0;background:#9832cc"></div>
<svg class="a" style="left:236px;top:1456px" width="22" height="15" viewBox="0 0 22 15"><path d="M3 3 L11 11.5 L19 3" fill="none" stroke="#fff" stroke-width="4.6" stroke-linecap="round" stroke-linejoin="round"/></svg>
<div class="a" style="left:289px;top:1448px;width:40px;height:34px;border-radius:17px;background:#7cc12a;border:2px solid #d9c2e8;color:#fff;font-size:19.5px;line-height:30px;text-align:center">1</div>
<div class="a" style="left:347px;top:1448px;width:32px;height:32px;border-radius:50%;background:#fff"></div>
<svg class="a" style="left:356px;top:1454px" width="14" height="21" viewBox="0 0 14 21"><circle cx="7" cy="3" r="2.9" fill="#9832cc"/><path d="M2.5 8 H9.5 V17.5 H12 V20.5 H2.5 V17.5 H5 V11 H2.5Z" fill="#9832cc"/></svg>
<div class="t" style="left:404px;top:1452px;font-size:24px;letter-spacing:0.5px;color:#fff">2.Coding</div>
<div class="a" style="left:2784px;top:1443px;width:131px;height:44px;border-radius:7px;background:#fff;border:2px solid #a08aa8"></div>
<div class="t" style="left:2796.8px;top:1451px;font-size:25.5px;letter-spacing:0.2px;color:#111">Actions</div>
<svg class="a" style="left:2889px;top:1460px" width="14" height="9" viewBox="0 0 14 9"><path d="M0 0 H14 L7 8Z" fill="#111"/></svg>
<div class="a" style="left:239px;top:1533px;width:2673px;height:106px;border:2px solid #e0e3e6;background:#fff"></div>
<svg class="a" style="left:189px;top:1539px" width="21" height="42" viewBox="0 0 21 42"><path d="M0.5 21 L20 1 V41Z" fill="#fff"/></svg>
<div class="a" style="left:133px;top:1540px;width:40px;height:40px;border-radius:50%;background:#dcdde4;border:10px solid #0d1834"></div>
<div class="a cb" style="left:267px;top:1568px"></div>
<svg class="a" style="left:356px;top:1565px" width="40" height="40" viewBox="0 0 40 40"><circle cx="20" cy="20" r="20" fill="#7cc12a"/><path d="M12 20.5 L17.5 26 L28 15.5" fill="none" stroke="#fff" stroke-width="5" stroke-linecap="round" stroke-linejoin="round"/></svg>
<div class="t ttl" style="left:414.3px;top:1570px;letter-spacing:-0.13px">Create the script using PHP</div>
<svg class="a" style="left:413px;top:1605px" width="14" height="18" viewBox="0 0 14 18"><circle cx="3" cy="3" r="2.2" fill="none" stroke="#1a5a9e" stroke-width="1.8"/><circle cx="3" cy="15" r="2.2" fill="none" stroke="#1a5a9e" stroke-width="1.8"/><circle cx="11" cy="5" r="2.2" fill="none" stroke="#1a5a9e" stroke-width="1.8"/><path d="M3 5.2 V12.8 M11 7.2 C11 10 3 10 3 12.5" fill="none" stroke="#1a5a9e" stroke-width="1.8"/></svg>
<div class="t sub" style="left:432.5px;top:1604px;letter-spacing:0.06px">0 subtasks</div>
<div class="a pill" style="left:918px;top:1552px;background:#d13b53"></div>
<div class="t stx" style="left:975.7px;top:1569px;letter-spacing:-0.78px">Stuck</div>
<svg class="a" style="left:1149px;top:1580px" width="17" height="10" viewBox="0 0 17 10"><path d="M0 0 H17 L8.5 9.5Z" fill="#fff"/></svg>
<div class="a" style="left:1305px;top:1570px;width:25px;height:25px;border-radius:50%;background:#03a9f4"></div>
<div class="t dt" style="left:1344.6px;top:1569px;letter-spacing:-1.16px">27-10-2022</div>
<div class="a pb" style="left:1596px;top:1550px;background:#84c528;box-shadow:inset 0 -2px 0 #6fa61f"></div>
<div class="t pc" style="left:1857px;top:1571px;letter-spacing:-1.0px">100%</div>
<div class="a tp" style="left:2044px;top:1552px"></div>
<svg class="a" style="left:2048px;top:1559px" width="48" height="48" viewBox="0 0 48 48"><circle cx="24" cy="24" r="23.7" fill="#fff"/><path d="M17 13.5 Q17 11.5 19 12.5 L35 22.5 Q36.5 24 35 25.5 L19 35.5 Q17 36.5 17 34.5Z" fill="#5b89f8"/></svg>
<div class="t tt" style="left:2102.8px;top:1569px;letter-spacing:-0.44px">40:44:01</div>
<div class="a" style="left:2485px;top:1551px;width:64px;height:64px;border-radius:50%;border:2.5px dashed #d8d8d8"></div>
<div class="t" style="left:2504px;top:1574px;font-size:22px;letter-spacing:1px;color:#222">+1</div>
<div class="a av" style="left:2440px;top:1553px;border-color:#0d1834;background:#efe7cc"><svg width="60" height="60" viewBox="0 0 60 60"><path d="M6 62 C2 34 10 6 31 5 C52 6 60 34 56 62 C50 54 47 40 45 30 L18 30 C16 40 13 54 6 62Z" fill="#16100c"/><ellipse cx="30.5" cy="37" rx="14.5" ry="19.5" fill="#a86a48"/><path d="M16 31 C17 13 44 12 45 31 C39 21 23 20 16 31Z" fill="#16100c"/><path d="M23 42 Q30.5 48 38 42 Q30.5 44.5 23 42Z" fill="#fff" stroke="#fff" stroke-width="1.5"/><path d="M18 62 C20 56 25 54 30 54 C36 54 41 56 43 62Z" fill="#d6d0b8"/></svg></div>
<div class="a av" style="left:2393px;top:1553px;border-color:#0d1834;background:#1b5cb8"><svg width="60" height="60" viewBox="0 0 60 60"><path d="M12 44 C8 20 18 6 30 6 C44 6 53 20 49 46 C46 40 45 32 44 28 L17 28 C15 34 14 40 12 44Z" fill="#33261e"/><ellipse cx="30.5" cy="37.5" rx="15" ry="19.5" fill="#cf9e84"/><path d="M15 31 C16 13 44 12 46 31 C40 21 24 20 15 31Z" fill="#33261e"/><path d="M25 46 Q30.5 48 36 46" stroke="#a86a60" stroke-width="2" fill="none"/><path d="M14 62 C16 56 22 54 30 54 C38 54 44 56 46 62Z" fill="#c8a08a"/></svg></div>
<div class="a av" style="left:2347px;top:1553px;border-color:#0d1834;background:#1b5cb8"><svg width="60" height="60" viewBox="0 0 60 60"><ellipse cx="31" cy="37" rx="15.5" ry="20" fill="#e6b99c"/><path d="M9 42 C4 20 15 5 31 5 C45 5 53 13 52 28 C47 20 40 17 30 18 C22 19 17 25 16 34 C15 42 16 48 19 56 C13 52 10 47 9 42Z" fill="#93592c"/><path d="M46 16 C50 18 52 22 52 28 L48 30 Z" fill="#93592c"/><path d="M25 45 Q31 49 37 45" stroke="#b07060" stroke-width="2" fill="none"/><path d="M14 62 C16 56 22 54 31 54 C40 54 46 56 48 62Z" fill="#d8b4a0"/></svg></div>
<div class="a ab" style="left:2601px;top:1553px;border-radius:7px 0 0 7px;background:#034c9a"></div>
<svg class="a" style="left:2627px;top:1574px" width="29" height="19" viewBox="0 0 29 19"><path d="M14.5 0.5 C21 0.5 26 4.5 28.5 9.5 C26 14.5 21 18.5 14.5 18.5 C8 18.5 3 14.5 0.5 9.5 C3 4.5 8 0.5 14.5 0.5Z" fill="#fff"/><circle cx="14.5" cy="9.5" r="6" fill="#034c9a"/><circle cx="14.5" cy="9.5" r="4.3" fill="#fff"/><circle cx="13" cy="7.8" r="2.2" fill="#034c9a"/></svg>
<div class="a ab" style="left:2682px;top:1553px;width:76px;background:#034c9a"></div>
<svg class="a" style="left:2708px;top:1571px" width="26" height="26" viewBox="0 0 26 26"><path d="M19 1.5 Q20.5 0 22 1.5 L24.5 4 Q26 5.5 24.5 7 L22.5 9 L17 3.5Z" fill="#fff"/><path d="M15.8 4.7 L21.3 10.2 L8 23.5 L1.5 25 Q0.5 25 0.8 24 L2.5 17.5Z" fill="#fff"/><path d="M4.5 18.5 L17 6" stroke="#034c9a" stroke-width="1.6"/><path d="M3.8 20.5 L5.5 22.2" stroke="#034c9a" stroke-width="1.6"/></svg>
<div class="a ab" style="left:2760px;top:1553px;width:73px;border-radius:0 7px 7px 0;background:#fe2541"></div>
<svg class="a" style="left:2785px;top:1571px" width="23" height="25" viewBox="0 0 23 25"><path d="M7.5 4 V2.5 Q7.5 1 9 1 H14 Q15.5 1 15.5 2.5 V4" fill="none" stroke="#fff" stroke-width="2"/><path d="M0.5 4.5 H22.5" stroke="#fff" stroke-width="2.6"/><path d="M2.8 5 L4 22.5 Q4.2 24 5.8 24 H17.2 Q18.8 24 19 22.5 L20.2 5" fill="none" stroke="#fff" stroke-width="2.4"/><path d="M8.8 8.5 V19.5 M14.2 8.5 V19.5" stroke="#fff" stroke-width="2.4"/></svg>
<!--/GROUPS-->
</body></html>
